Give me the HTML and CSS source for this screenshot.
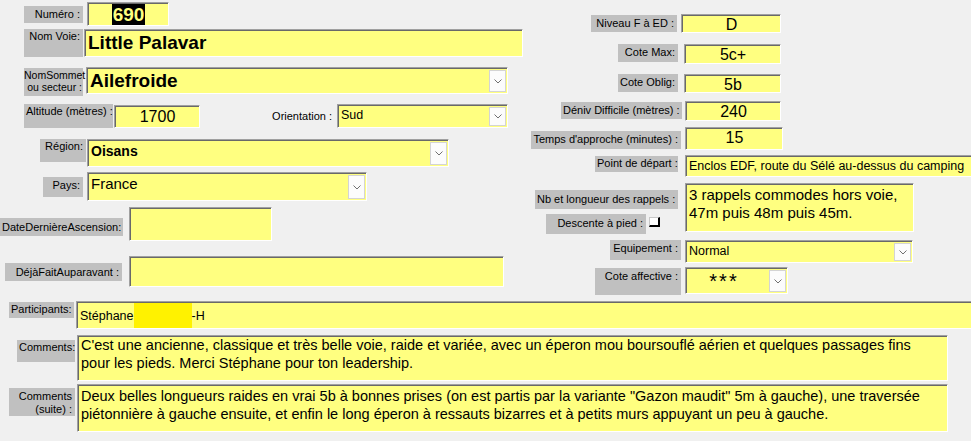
FILE: index.html
```html
<!DOCTYPE html>
<html lang="fr">
<head>
  <meta charset="UTF-8" />
  <title>Voie</title>
  <link rel="stylesheet" href="styles.css">
</head>
<body>
  <div class="form">

    <div class="top">
      <!-- left column -->
      <div class="col-left">
        <div class="row r-num">
          <span class="lbl">Numéro :</span>
          <div class="fld center"><span class="sel">690</span></div>
        </div>
        <div class="row r-voie">
          <span class="lbl">Nom Voie:</span>
          <div class="fld big">Little Palavar</div>
        </div>
        <div class="row r-sommet">
          <span class="lbl">NomSommet ou secteur :</span>
          <div class="fld big combo"><span class="val">Ailefroide</span><span class="btn"></span></div>
        </div>
        <div class="row r-alt">
          <span class="lbl">Altitude (mètres) :</span>
          <div class="fld center num">1700</div>
          <span class="plain">Orientation :</span>
          <div class="fld combo small"><span class="val">Sud</span><span class="btn"></span></div>
        </div>
        <div class="row r-region">
          <span class="lbl">Région:</span>
          <div class="fld combo mid bold"><span class="val">Oisans</span><span class="btn"></span></div>
        </div>
        <div class="row r-pays">
          <span class="lbl">Pays:</span>
          <div class="fld combo mid"><span class="val">France</span><span class="btn"></span></div>
        </div>
        <div class="row r-date">
          <span class="lbl">DateDernièreAscension:</span>
          <div class="fld"></div>
        </div>
        <div class="row r-deja">
          <span class="lbl">DéjàFaitAuparavant :</span>
          <div class="fld"></div>
        </div>
      </div>

      <!-- right column -->
      <div class="col-right">
        <div class="row r-niveau">
          <span class="lbl">Niveau F à ED :</span>
          <div class="fld center num">D</div>
        </div>
        <div class="row r-max">
          <span class="lbl">Cote Max:</span>
          <div class="fld center num">5c+</div>
        </div>
        <div class="row r-oblig">
          <span class="lbl">Cote Oblig:</span>
          <div class="fld center num">5b</div>
        </div>
        <div class="row r-deniv">
          <span class="lbl">Déniv Difficile (mètres) :</span>
          <div class="fld center num">240</div>
        </div>
        <div class="row r-temps">
          <span class="lbl">Temps d'approche (minutes) :</span>
          <div class="fld center num">15</div>
        </div>
        <div class="row r-depart">
          <span class="lbl">Point de départ :</span>
          <div class="fld small">Enclos EDF, route du Sélé au-dessus du camping</div>
        </div>
        <div class="row r-rappels">
          <div class="stack">
            <span class="lbl">Nb et longueur des rappels :</span>
            <div class="descente">
              <span class="lbl">Descente à pied :</span>
              <span class="check"></span>
            </div>
          </div>
          <div class="fld text16">3 rappels commodes hors voie,<br>47m puis 48m puis 45m.</div>
        </div>
        <div class="row r-equip">
          <span class="lbl">Equipement :</span>
          <div class="fld combo small"><span class="val">Normal</span><span class="btn"></span></div>
        </div>
        <div class="row r-affect">
          <span class="lbl">Cote affective :</span>
          <div class="fld combo stars"><span class="val">***</span><span class="btn"></span></div>
        </div>
      </div>
    </div>

    <!-- full width rows -->
    <div class="row r-part">
      <span class="lbl">Participants:</span>
      <div class="fld small">Stéphane<span class="masked"></span>-H</div>
    </div>
    <div class="row r-com1">
      <span class="lbl">Comments:</span>
      <div class="fld memo">C'est une ancienne, classique et très belle voie, raide et variée, avec un éperon mou boursouflé aérien et quelques passages fins pour les pieds. Merci Stéphane pour ton leadership.</div>
    </div>
    <div class="row r-com2">
      <span class="lbl">Comments (suite) :</span>
      <div class="fld memo">Deux belles longueurs raides en vrai 5b à bonnes prises (on est partis par la variante "Gazon maudit" 5m à gauche), une traversée piétonnière à gauche ensuite, et enfin le long éperon à ressauts bizarres et à petits murs appuyant un peu à gauche.</div>
    </div>

  </div>
</body>
</html>
```

FILE: styles.css
```css
body {
  margin: 0;
  background: #f0f0f0;
  font-family: "Liberation Sans", Arial, sans-serif;
  color: #000;
  overflow: hidden;
}

.form {
  width: 971px;
  height: 441px;
  overflow: hidden;
}

.top {
  display: flex;
}

.col-left {
  width: 523px;
  flex: none;
}

.col-right {
  flex: 1;
}

.row {
  display: flex;
  align-items: flex-start;
}

/* grey labels */
.lbl {
  flex: none;
  box-sizing: border-box;
  background: #c0c0c0;
  font-size: 11px;
  line-height: 13px;
  text-align: right;
  padding: 1px 3px 0 2px;
  white-space: nowrap;
}

.plain {
  flex: none;
  font-size: 11px;
  line-height: 24px;
  text-align: right;
}

/* yellow controls */
.fld {
  flex: none;
  box-sizing: border-box;
  background: #ffff80;
  border-top: 1px solid #a0a0a0;
  border-left: 1px solid #a0a0a0;
  border-right: 1px solid #fff;
  border-bottom: 1px solid #fff;
  box-shadow: inset 1px 1px 0 #696969;
  padding: 1px 2px 0 3px;
  overflow: hidden;
  white-space: nowrap;
}

.center {
  text-align: center;
}

.num {
  font-size: 16px;
}

.big {
  font-size: 19px;
  font-weight: bold;
  line-height: 24px;
}

.mid {
  font-size: 15px;
  line-height: 20px;
}

.bold {
  font-size: 14px;
  font-weight: bold;
}

.small {
  font-size: 12.5px;
  line-height: 18px;
}

.text16 {
  font-size: 15px;
  line-height: 18px;
}

.memo {
  font-size: 14.5px;
  line-height: 17.5px;
  white-space: normal;
  padding: 1px 24px 0 3px;
}

.combo {
  display: flex;
  padding-right: 1px;
  padding-bottom: 1px;
}

.combo .val {
  flex: 1;
}

.btn {
  flex: none;
  width: 17px;
  box-sizing: border-box;
  background: #fcfcfc url("data:image/svg+xml,%3Csvg xmlns='http://www.w3.org/2000/svg' width='8' height='5'%3E%3Cpolyline points='0.5,0.5 4,4 7.5,0.5' fill='none' stroke='%23707070' stroke-width='1'/%3E%3C/svg%3E") no-repeat center;
  border: 1px solid #d4d4d4;
  margin-top: 1px;
}

.stars .val {
  font-size: 20px;
  letter-spacing: 2px;
  text-align: center;
  line-height: 24px;
  padding-right: 10px;
}

.sel {
  background: #000;
  color: #ffff80;
  font-size: 19px;
  font-weight: bold;
  line-height: 21px;
  display: inline-block;
  padding: 0 1px;
}

.check {
  flex: none;
  width: 11px;
  height: 10px;
  box-sizing: border-box;
  background: #fff;
  border-top: 1px solid #c8c8c8;
  border-left: 1px solid #c8c8c8;
  border-right: 2px solid #000;
  border-bottom: 2px solid #000;
  margin: 3px 0 0 3px;
}

.masked {
  display: inline-block;
  vertical-align: top;
  width: 58px;
  height: 26px;
  margin-top: 1px;
  background: #fff200;
}

/* left column rows */
.r-num { margin-top: 2px; }
.r-num .lbl { margin: 4px 0 0 24px; width: 59px; height: 17px; padding-top: 2px; }
.r-num .fld { margin-left: 4px; width: 82px; height: 24px; }

.r-voie { margin-top: 3px; }
.r-voie .lbl { margin-left: 24px; width: 59px; height: 28px; }
.r-voie .fld { margin-left: 1px; width: 439px; height: 28px; }

.r-sommet { margin-top: 10px; }
.r-sommet .lbl { margin: 1px 0 0 24px; width: 59px; height: 28px; font-size: 10.5px; line-height: 12px; padding: 1px 1px 0 0; white-space: normal; }
.r-sommet .fld { margin-left: 3px; width: 422px; height: 27px; }

.r-alt { margin-top: 8px; }
.r-alt .lbl { margin-left: 24px; width: 89px; height: 24px; }
.r-alt .num { margin: 1px 0 0 1px; width: 86px; height: 23px; line-height: 20px; }
.r-alt .plain { width: 132px; }
.r-alt .combo { margin-left: 5px; width: 171px; height: 24px; }

.r-region { margin-top: 11px; }
.r-region .lbl { margin-left: 40px; width: 46px; height: 23px; }
.r-region .fld { margin-left: 1px; width: 362px; height: 28px; }

.r-pays { margin-top: 5px; }
.r-pays .lbl { margin: 5px 0 0 43px; width: 40px; height: 20px; padding-top: 2px; }
.r-pays .fld { margin-left: 4px; width: 280px; height: 29px; }

.r-date { margin-top: 6px; }
.r-date .lbl { margin-top: 11px; width: 123px; height: 18px; padding-top: 3px; }
.r-date .fld { margin-left: 6px; width: 143px; height: 34px; }

.r-deja { margin-top: 15px; }
.r-deja .lbl { margin: 7px 0 0 5px; width: 117px; height: 18px; padding-top: 3px; }
.r-deja .fld { margin-left: 7px; width: 375px; height: 31px; }

/* right column rows */
.col-right .num { line-height: 17px; }

.r-niveau { margin-top: 14px; }
.r-niveau .lbl { margin: 1px 0 0 68px; width: 86px; height: 17px; padding-top: 2px; }
.r-niveau .fld { margin-left: 4px; width: 100px; height: 19px; }

.r-max { margin-top: 11px; }
.r-max .lbl { margin-left: 95px; width: 60px; height: 18px; padding-top: 2px; }
.r-max .fld { margin-left: 6px; width: 97px; height: 20px; }

.r-oblig { margin-top: 10px; }
.r-oblig .lbl { margin-left: 95px; width: 60px; height: 18px; padding-top: 2px; }
.r-oblig .fld { margin-left: 6px; width: 97px; height: 19px; }

.r-deniv { margin-top: 8px; }
.r-deniv .lbl { margin: 1px 0 0 38px; width: 121px; height: 17px; padding-top: 2px; }
.r-deniv .fld { margin-left: 3px; width: 96px; height: 20px; }

.r-temps { margin-top: 6px; }
.r-temps .lbl { margin: 4px 0 0 8px; width: 150px; height: 18px; padding-top: 2px; }
.r-temps .fld { margin-left: 4px; width: 98px; height: 23px; }

.r-depart { margin-top: 5px; }
.r-depart .lbl { margin: 1px 0 0 72px; width: 83px; height: 16px; }
.r-depart .fld { margin-left: 7px; width: 290px; height: 22px; }

.r-rappels { margin-top: 6px; }
.stack { flex: none; width: 162px; }
.stack > .lbl { display: block; margin: 7px 0 0 12px; width: 143px; height: 19px; padding-top: 3px; }
.descente { display: flex; margin: 5px 0 0 23px; }
.descente .lbl { width: 100px; height: 20px; padding-top: 3px; }
.r-rappels .fld { width: 229px; height: 49px; padding-top: 2px; }

.r-equip { margin-top: 6px; }
.r-equip .lbl { margin-left: 87px; width: 71px; height: 20px; padding-top: 2px; }
.r-equip .fld { margin-left: 4px; width: 228px; height: 23px; line-height: 19px; }

.r-affect { margin-top: 4px; }
.r-affect .lbl { margin: 1px 0 0 72px; width: 86px; height: 27px; padding-top: 2px; }
.r-affect .fld { margin-left: 4px; width: 103px; height: 27px; }

/* full width rows */
.r-part { margin-top: 6px; }
.r-part .lbl { margin: 1px 0 0 9px; width: 65px; height: 16px; }
.r-part .fld { margin-left: 2px; width: 900px; height: 28px; padding-top: 0; line-height: 28px; }

.r-com1 { margin-top: 6px; }
.r-com1 .lbl { margin: 5px 0 0 17px; width: 58px; height: 22px; }
.r-com1 .fld { margin-left: 2px; width: 871px; height: 46px; }

.r-com2 { margin-top: 3px; }
.r-com2 .lbl { margin: 4px 0 0 9px; width: 66px; height: 28px; padding-top: 2px; white-space: normal; }
.r-com2 .fld { margin-left: 2px; width: 871px; height: 48px; padding-top: 3px; }
```
